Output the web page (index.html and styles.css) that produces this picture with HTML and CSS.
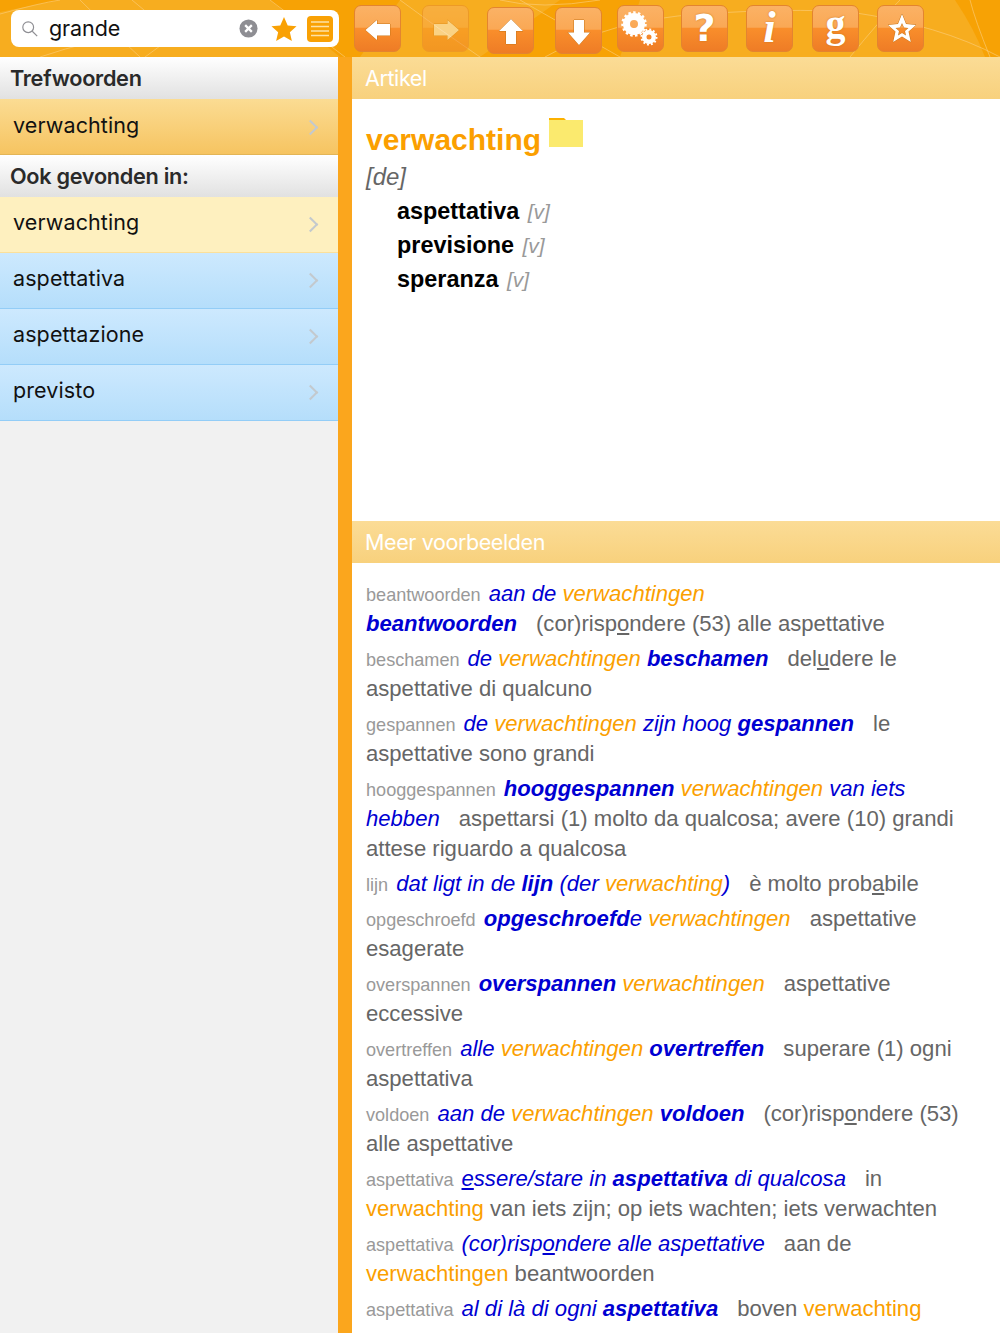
FILE: index.html
```html
<!DOCTYPE html>
<html lang="nl">
<head>
<meta charset="utf-8">
<title>Woordenboek</title>
<link rel="stylesheet" href="styles.css">
</head>
<body>
<header class="topbar">
  <svg class="topbar-bg" viewBox="0 0 1000 57" preserveAspectRatio="none" aria-hidden="true">
    <path class="tone" d="M0 12 L60 0 L270 0 L340 57 L0 57Z"/>
    <path class="tone" d="M640 0 L955 0 Q975 30 985 57 L620 57Z"/>
    <path class="tone" d="M400 0 L560 0 L480 57 L360 57Z"/>
    <path class="ln" d="M0 14 Q40 3 60 0M80 0 Q100 20 140 57M132 0 L150 15M270 0 L345 57M40 57 Q90 40 150 30M145 57 L175 35M400 0 Q440 30 480 57M520 0 L620 57M545 57 Q610 20 700 14T850 12Q940 25 1000 57M990 57 Q975 20 970 0M850 57 Q880 20 900 0M500 0 Q540 10 600 0"/>
  </svg>
  <div class="search">
    <svg class="search-icon" viewBox="0 0 20 20" aria-hidden="true"><circle cx="8" cy="8" r="6"/><path d="M12.5 12.5 L18 18"/></svg>
    <span class="search-text">grande</span>
    <svg class="clear" viewBox="0 0 20 20" aria-hidden="true"><circle cx="10" cy="10" r="9.5"/><path d="M6.5 6.5 L13.5 13.5M13.5 6.5 L6.5 13.5"/></svg>
    <svg class="fav" viewBox="0 0 28 28" aria-hidden="true"><path d="M14 1 L18 10.2 L27.5 11 L20.3 17.4 L22.5 27 L14 22 L5.5 27 L7.7 17.4 L.5 11 L10 10.2Z"/></svg>
    <svg class="list" viewBox="0 0 26 26" aria-hidden="true"><rect width="26" height="26" rx="4"/><path d="M4 6 H22M4 10.5 H22M4 15 H22M4 19.5 H22"/></svg>
  </div>
  <nav class="tools">
    <span class="btn b-back"><svg viewBox="0 0 46 46"><path class="g" d="M10.500 24 L22 14 V18 H35 V29.500 H22 V34Z"/></svg></span>
    <span class="btn b-fwd dim"><svg viewBox="0 0 46 46"><path class="g" d="M36 24 L24.500 14 V18 H11 V29.500 H24.500 V34Z"/></svg></span>
    <span class="btn b-up low"><svg viewBox="0 0 46 46"><path class="g" d="M23 11 L35 23 H28 V36 H18 V23 H11Z"/></svg></span>
    <span class="btn b-down low"><svg viewBox="0 0 46 46"><path class="g" d="M23 37 L34 24.500 H28 V12 H18 V24.500 H12Z"/></svg></span>
    <span class="btn b-gear"><svg viewBox="0 0 46 46">
      <circle class="teeth" cx="16" cy="18" r="11.500" stroke-dasharray="2.500 2.320"/>
      <circle class="ring" cx="16" cy="18" r="7.500"/>
      <circle class="teeth small" cx="31" cy="31" r="7.500" stroke-dasharray="1.900 2.030"/>
      <circle class="ring small" cx="31" cy="31" r="4.750"/>
    </svg></span>
    <span class="btn b-help glyph">?</span>
    <span class="btn b-info glyph">i</span>
    <span class="btn b-g glyph">g</span>
    <span class="btn b-star"><svg viewBox="0 0 46 46"><path class="g" fill-rule="evenodd" d="M24 8 L28 18 L38 19 L30.500 25.500 L32.800 36 L24 30.500 L15.200 36 L17.500 25.500 L10 19 L20 18Z M24 17 L22 21.500 L17.500 22 L21 25 L20 29.500 L24 27 L28 29.500 L27 25 L30.500 22 L26 21.500Z"/></svg></span>
  </nav>
</header>
<div class="main">
  <aside class="side">
    <h2 class="side-head">Trefwoorden</h2>
    <a class="row selected">verwachting<i class="chev"></i></a>
    <h2 class="side-head second">Ook gevonden in:</h2>
    <a class="row cream">verwachting<i class="chev"></i></a>
    <a class="row blue">aspettativa<i class="chev"></i></a>
    <a class="row blue">aspettazione<i class="chev"></i></a>
    <a class="row blue">previsto<i class="chev"></i></a>
  </aside>
  <main class="content">
    <h2 class="band">Artikel</h2>
    <section class="article">
      <h1 class="title">verwachting<svg class="folder" viewBox="0 0 34 29" aria-hidden="true"><path class="folder-tab" d="M0 0 H15 L18 3 H0Z"/><rect class="folder-body" y="2" width="34" height="27"/></svg></h1>
      <div class="gender">[de]</div>
      <div class="tr"><b>aspettativa</b> <em>[v]</em></div>
      <div class="tr"><b>previsione</b> <em>[v]</em></div>
      <div class="tr"><b>speranza</b> <em>[v]</em></div>
    </section>
    <h2 class="band">Meer voorbeelden</h2>
    <section class="examples">
      <p><small>beantwoorden</small><i>aan de <u>verwachtingen</u> <b>beantwoorden</b></i><span>(cor)risp<ins>o</ins>ndere (53) alle aspettative</span></p>
      <p><small>beschamen</small><i>de <u>verwachtingen</u> <b>beschamen</b></i><span>del<ins>u</ins>dere le aspettative di qualcuno</span></p>
      <p><small>gespannen</small><i>de <u>verwachtingen</u> zijn hoog <b>gespannen</b></i><span>le aspettative sono grandi</span></p>
      <p><small>hooggespannen</small><i><b>hooggespannen</b> <u>verwachtingen</u> van iets hebben</i><span>aspettarsi (1) molto da qualcosa; avere (10) grandi attese riguardo a qualcosa</span></p>
      <p><small>lijn</small><i>dat ligt in de <b>lijn</b> (der <u>verwachting</u>)</i><span>è molto prob<ins>a</ins>bile</span></p>
      <p><small>opgeschroefd</small><i><b>opgeschroefd</b>e <u>verwachtingen</u></i><span>aspettative esagerate</span></p>
      <p><small>overspannen</small><i><b>overspannen</b> <u>verwachtingen</u></i><span>aspettative eccessive</span></p>
      <p><small>overtreffen</small><i>alle <u>verwachtingen</u> <b>overtreffen</b></i><span>superare (1) ogni aspettativa</span></p>
      <p><small>voldoen</small><i>aan de <u>verwachtingen</u> <b>voldoen</b></i><span>(cor)risp<ins>o</ins>ndere (53) alle aspettative</span></p>
      <p><small>aspettativa</small><i><ins>e</ins>ssere/stare in <b>aspettativa</b> di qualcosa</i><span>in <u>verwachting</u> van iets zijn; op iets wachten; iets verwachten</span></p>
      <p><small>aspettativa</small><i>(cor)risp<ins>o</ins>ndere alle aspettative</i><span>aan de <u>verwachtingen</u> beantwoorden</span></p>
      <p><small>aspettativa</small><i>al di là di ogni <b>aspettativa</b></i><span>boven <u>verwachting</u></span></p>
    </section>
  </main>
</div>
</body>
</html>
```
FILE: styles.css
```css
* { box-sizing: border-box; }
html, body { margin: 0; height: 1333px; overflow: hidden; }
body { font-family: "Liberation Sans", Arial, sans-serif; background: #fba61d; color: #111; }

.topbar { position: relative; height: 57px; background: #f7a205; overflow: hidden; display: flex; }
.topbar-bg { position: absolute; inset: 0; width: 1000px; height: 57px; }
.tone { fill: #f7ad1f; }
.ln { fill: none; stroke: #fbcf7e; stroke-width: 1; opacity: .6; }

.search { position: relative; margin: 10px 0 0 11px; width: 328px; height: 37px; background: #fff; border-radius: 8px; display: flex; align-items: center; }
.search-icon { width: 18px; height: 18px; margin-left: 10px; fill: none; stroke: #8e8e93; stroke-width: 1.300; }
.search-text { font: 400 21.5px/37px Inter, "Open Sans", sans-serif; letter-spacing: -.1px; color: #111; margin-left: 10px; flex: 1; }
.clear { width: 19px; height: 19px; margin-right: 13px; }
.clear circle { fill: #8e8e93; }
.clear path { stroke: #fff; stroke-width: 2.400; }
.fav { width: 26px; height: 26px; margin-right: 10px; fill: #f9a104; }
.list { width: 26px; height: 26px; margin-right: 6px; }
.list rect { fill: #f9a104; }
.list path { stroke: #fde2a8; stroke-width: 1.500; }

.tools { position: relative; display: flex; margin-left: 15px; padding-top: 5px; }
.btn { width: 47px; height: 47px; border: 1px solid #e38430; border-radius: 7px; background: linear-gradient(#fbb265 0, #faa855 47%, #f98e2b 50%, #ee7c26 100%); display: flex; align-items: center; justify-content: center; color: #fff; flex: none; }
.btn svg { width: 46px; height: 46px; flex: none; }
.g { fill: #fff; stroke: #c8761a; stroke-width: 1; paint-order: stroke; }
.low { margin-top: 2px; }
.dim { opacity: .45; }
.b-fwd { margin-left: 21px; }
.b-up { margin-left: 18px; }
.b-down { margin-left: 21px; }
.b-gear { margin-left: 15px; }
.b-help { margin-left: 17px; }
.b-info { margin-left: 18px; }
.b-g { margin-left: 19px; }
.b-star { margin-left: 18px; }
.teeth { fill: none; stroke: #fff; stroke-width: 2.500; }
.teeth.small { stroke-width: 2; }
.ring { fill: none; stroke: #fff; stroke-width: 7; }
.ring.small { stroke-width: 4.500; }
.glyph { text-shadow: 0 0 2px #c8761a; font-weight: 700; }
.b-help { font: 700 38px/47px "DejaVu Sans", sans-serif; padding-bottom: 1px; }
.b-info { font: italic 700 45px/47px "Liberation Serif", serif; padding-bottom: 3px; }
.b-g { font: 700 40px/47px "Liberation Serif", serif; padding-bottom: 10px; }

.main { display: flex; height: 1276px; }
.side { width: 338px; background: #f1f1f1; flex: none; }
.side-head { margin: 0; height: 42px; padding-left: 10px; font: 600 21.7px/42px Inter, "Open Sans", sans-serif; letter-spacing: -.3px; color: #2a2a2a; background: linear-gradient(#fff, #e1e1e1); }
.side-head.second { height: 41.5px; line-height: 42px; }
.row { display: flex; align-items: center; justify-content: space-between; height: 56px; padding: 0 18px 2px 13px; font: 400 21.5px/1 Inter, "Open Sans", sans-serif; letter-spacing: .1px; color: #111; border-bottom: 1px solid; }
.selected { background: linear-gradient(#fbdc93, #f6c461); border-color: #e3b557; }
.cream { background: #fef0bf; border-color: #fbe09b; }
.blue { background: linear-gradient(#cde9fe, #b5defb); border-color: #93cdf7; }
.chev { width: 11px; height: 11px; margin: 3px 4px 0 0; border-top: 2px solid #c3c9ce; border-right: 2px solid #c3c9ce; transform: rotate(45deg); }

.content { width: 648px; margin-left: 14px; background: #fff; flex: none; overflow: hidden; }
.band { margin: 0; height: 42px; padding-left: 13px; font: 400 21.5px/42px Inter, "Open Sans", sans-serif; letter-spacing: -.4px; color: #fff; background: linear-gradient(#fbdc96, #f8d17d); }
.article { height: 422px; padding: 20px 14px 0; }
.title { display: flex; align-items: flex-start; margin: 0; height: 40px; font: 700 30px/41px "Liberation Sans", sans-serif; color: #fb9f00; }
.folder { width: 34px; height: 29px; margin: -1px 0 0 8px; flex: none; }
.folder-tab { fill: #fcb100; }
.folder-body { fill: #fbea6e; }
.gender { font: italic 400 24px/34px "Liberation Sans", sans-serif; color: #666; margin-top: 1px; }
.tr { padding-left: 31px; font: 400 23.4px/34px "Liberation Sans", sans-serif; }
.tr b { color: #000; line-height: 1; }
.tr em { font-size: 21px; line-height: 1; color: #999; padding-left: 2px; }

.examples { padding: 16px 30px 0 14px; }
.examples p { margin: 0 0 5px; font-size: 22.1px; line-height: 30px; color: #666; }
.examples small { font-size: 18.1px; line-height: 1; color: #999; margin-right: 8px; }
.examples i { color: #0000d2; line-height: 1; }
.examples b { font-weight: 700; }
.examples u { text-decoration: none; color: #fb9f00; }
.examples ins { text-decoration: underline; }
.examples span { padding-left: 19px; line-height: 1; }
```
